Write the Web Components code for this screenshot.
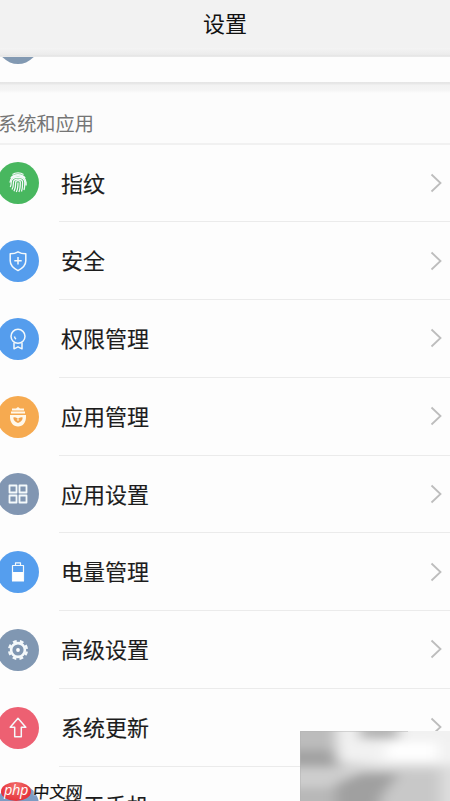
<!DOCTYPE html>
<html lang="zh-CN">
<head>
<meta charset="utf-8">
<title>设置</title>
<style>
html,body{margin:0;height:100%;overflow:hidden;background:#fdfdfd}
body{font-family:"Noto Sans CJK SC",sans-serif;color:#1c1c1c}
</style>
</head>
<body>
<settings-page></settings-page>
<script>
const ICONS = {
  finger: `<g stroke-width="1.25"><path d="M12.5 9.4c3-2 8-2 11 0M10.8 13c3.2-4.6 11.2-4.6 14.4 0M9.900 17.500c0-9 16.200-9 16.200 0v3M10.200 22c1-1.300 1-2.500 1-4.500 0-7 13.600-7 13.600 0 0 3 0 5-.8 7.500M12 24.500c1.500-2.500 1.400-4 1.400-7 0-4.600 9.200-4.600 9.200 0 0 4 0 6-1.100 9M14 26.300c1.700-3 1.700-5 1.700-8.800 0-2.400 4.600-2.400 4.600 0 0 4 0 6.500-1.400 9.500M16.300 27c1.600-3 1.700-5 1.700-9.500"/></g>`,
  shield: `<path d="M18 8.800c2.300 1.500 4.700 2 7.800 2v7c0 4.600-3 7.400-7.800 9.800-4.800-2.400-7.800-5.200-7.800-9.800v-7c3.100 0 5.500-.5 7.800-2zM18 14v7.400M14.300 17.700h7.400"/>`,
  medal: `<circle cx="18" cy="15.300" r="7"/><path d="M14 21.500v6.300l4-2 4 2v-6.300M14.500 15.500a3.600 3.600 0 0 0 1.500 2.600"/>`,
  robot: `<g fill="#fff8ea" stroke="none"><path d="M12 9.500h4l2-1.500 2 1.500h4v2H12zM11 12.500h14v2H11z"/><path d="M10 16h16v1.800c0 5.700-3 9.700-8 9.700s-8-4-8-9.700z"/></g><path fill="#f1a34d" stroke="none" d="M13.300 18.500q2.500-1 4.700 1.200 2.200-2.200 4.700-1.200 0 3.500-4.700 5.500-4.700-2-4.700-5.500z"/><circle cx="18" cy="20.800" r="1.200" fill="#fbd7a6" stroke="none"/>`,
  grid: `<path stroke-width="1.800" d="M9.500 9.500h7v7h-7zM19.500 9.500h7v7h-7zM9.500 19.500h7v7h-7zM19.500 19.500h7v7h-7z"/>`,
  battery: `<path fill="#fff" stroke="none" d="M12 18h12v9.500H12z"/><path stroke-width="1.200" d="M12.500 26.500V11.500h11v15M15.500 11V8.800h5V11"/>`,
  gear: `<circle cx="18" cy="18" r="6.900" stroke-width="2.600"/><circle cx="18" cy="18" r="8.900" stroke-width="2.400" stroke-dasharray="3.800 3.190" stroke-dashoffset="-1.600"/><circle cx="18" cy="18" r="1.900" fill="#fff" stroke="none"/>`,
  update: `<path d="M18 8.300l7.800 8.900h-4.500v9.600h-6.600v-9.600h-4.500z"/>`
};

class PageHeader extends HTMLElement {
  constructor(){
    super();
    this.attachShadow({mode:'open'}).innerHTML = `<style>
      :host{display:flex;box-sizing:border-box;flex:none;height:57px;justify-content:center;background:linear-gradient(#f2f2f2 48px,#f4f4f4 48px,#ebebeb 55px,#e2e2e2 56px,#f0f0f0)}
      span{font-size:22px;line-height:32px;margin-top:6px;color:#111}
    </style><span><slot></slot></span>`;
  }
}
class SectionTitle extends HTMLElement {
  constructor(){
    super();
    this.attachShadow({mode:'open'}).innerHTML = `<style>
      :host{display:block;box-sizing:border-box;flex:none;height:62.500px;padding:26px 0 0 0;background:linear-gradient(#e5e5e5,#e8e8e8 2px,#f2f2f2 3px,#f4f4f4 8px,#fcfcfc 11px);border-bottom:2px solid #f1f1f1;font-size:19.200px;line-height:30px;color:#757575}
      span{display:block;margin-left:-2px}
    </style><span><slot></slot></span>`;
  }
}
class RoundIcon extends HTMLElement {
  connectedCallback(){
    const color = this.getAttribute('color');
    this.attachShadow({mode:'open'}).innerHTML = `<style>
      :host{display:flex;flex:none;width:42px;height:42px;border-radius:50%;background:${color};align-items:center;justify-content:center}
      svg{width:36px;height:36px;fill:none;stroke:#f4f9fb;stroke-width:1.500;stroke-linejoin:round}
    </style><svg viewBox="0 0 36 36">${ICONS[this.getAttribute('name')] || ''}</svg>`;
  }
}
class SettingRow extends HTMLElement {
  connectedCallback(){
    this.attachShadow({mode:'open'}).innerHTML = `<style>
      :host{display:flex;flex:none;height:77.750px;align-items:center}
      round-icon{margin-left:-3px}
      .body{display:flex;flex:1;align-items:center;justify-content:space-between;box-sizing:border-box;height:100%;margin-left:20px;padding:0 8px 0 2px;border-bottom:1px solid #ebebeb;font-size:22px}
      .label{line-height:32px;margin-top:-2.500px;-webkit-text-stroke:.15px #1c1c1c}
      svg{width:12px;height:20px;fill:none;stroke:#bdbdbd;stroke-width:1.800}
    </style>
    <round-icon name="${this.getAttribute('icon')}" color="${this.getAttribute('color')}"></round-icon>
    <div class="body"><span class="label"><slot></slot></span><svg viewBox="0 0 12 20"><path d="M1.500 1.500L10.500 10l-9 8.500"/></svg></div>`;
  }
}
class SiteBadge extends HTMLElement {
  constructor(){
    super();
    this.attachShadow({mode:'open'}).innerHTML = `<style>
      :host{position:absolute;left:1px;bottom:0;display:flex;align-items:center;gap:2px}
      .oval{width:30px;height:19px;border-radius:50%;background:radial-gradient(ellipse at 50% 25%,#f3716d,#e5303a 75%);color:#fff;font:italic 14.500px/16px "Open Sans","Noto Sans",sans-serif;text-align:center;letter-spacing:-.3px}
      .name{font-size:16.500px;line-height:19px;color:#111;-webkit-text-stroke:.2px #111;transform:skewX(-5deg);text-shadow:0 0 2px #fff,0 0 2px #fff}
    </style><span class="oval">php</span><span class="name">中文网</span>`;
  }
}
class BlurPatch extends HTMLElement {
  constructor(){
    super();
    this.attachShadow({mode:'open'}).innerHTML = `<style>
      :host{position:absolute;left:300px;top:731px;width:150px;height:70px;overflow:hidden;background:#d8d8d8}
      svg{display:block}
    </style><svg width="150" height="70" viewBox="0 0 150 70"><defs><filter id="b" filterUnits="userSpaceOnUse" x="-40" y="-40" width="230" height="150" color-interpolation-filters="sRGB"><feGaussianBlur stdDeviation="7 5"/></filter></defs>
    <g filter="url(#b)">
      <path fill="#d6d6d6" d="M-30-30h210v130H-30z"/>
      <path fill="#bcbcbc" d="M-30-30h66v50h-66z"/><path fill="#a2a2a2" d="M-30 19h68v17h-68z"/>
      <path fill="#f1f1f1" d="M36-30h144v64H80L36 29z"/><path fill="#b4b4b4" d="M60-14h38v22H60z"/>
      <path fill="#fff" d="M88 11h50v18H84z"/>
      <path fill="#cdcdcd" d="M-30 38h78v16h-78z"/><path fill="#b8b8b8" d="M-30 56h80v44h-80z"/>
      <path fill="#a0a0a0" d="M60 42h38v16L80 68v32H36V54z"/><path fill="#c8c8c8" d="M100 40h40v60H82V64z"/>
      <path fill="#dedede" d="M142 35h40v65h-40z"/>
    </g><path d="M.5 70V.5H108" fill="none" stroke="#b2b2b2" stroke-opacity=".45"/></svg>`;
  }
}
class SettingsPage extends HTMLElement {
  constructor(){
    super();
    this.attachShadow({mode:'open'}).innerHTML = `<style>
      :host{position:relative;display:flex;flex-direction:column;width:450px;height:801px;overflow:hidden;background:#fdfdfd}
      .previous{flex:none;height:25px;overflow:hidden}
      .previous round-icon{margin:-35px 0 0 -3px}
    </style>
    <page-header>设置</page-header>
    <div class="previous"><round-icon color="#8299b2"></round-icon></div>
    <section-title>系统和应用</section-title>
    <setting-row icon="finger" color="#48b75f">指纹</setting-row>
    <setting-row icon="shield" color="#559ded">安全</setting-row>
    <setting-row icon="medal" color="#559ded">权限管理</setting-row>
    <setting-row icon="robot" color="#f6aa50">应用管理</setting-row>
    <setting-row icon="grid" color="#8196b2">应用设置</setting-row>
    <setting-row icon="battery" color="#559eee">电量管理</setting-row>
    <setting-row icon="gear" color="#8097b2">高级设置</setting-row>
    <setting-row icon="update" color="#ed6072">系统更新</setting-row>
    <setting-row icon="phone" color="#7c9cc4">关于手机</setting-row>
    <blur-patch></blur-patch>
    <site-badge></site-badge>`;
  }
}
customElements.define('page-header', PageHeader);
customElements.define('section-title', SectionTitle);
customElements.define('round-icon', RoundIcon);
customElements.define('setting-row', SettingRow);
customElements.define('site-badge', SiteBadge);
customElements.define('blur-patch', BlurPatch);
customElements.define('settings-page', SettingsPage);
</script>
</body>
</html>
